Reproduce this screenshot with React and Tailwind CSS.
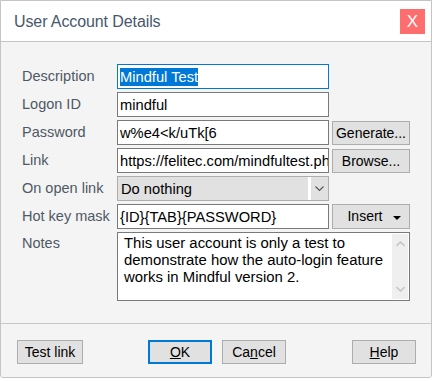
import React from "react";

const F = { fontFamily: '"Liberation Sans", Arial, sans-serif' };

function Field({ children, className = "" }) {
  return (
    <div
      className={
        "h-[25px] w-[212px] border border-[#7a7a7a] bg-white pl-[2px] pt-[1px] flex items-center overflow-hidden whitespace-nowrap text-[14.7px] text-black " +
        className
      }
    >
      {children}
    </div>
  );
}

function Btn({ children, className = "" }) {
  return (
    <div
      className={
        "flex items-center justify-center border border-[#adadad] bg-[#e1e1e1] text-[14px] text-black whitespace-nowrap " +
        className
      }
    >
      {children}
    </div>
  );
}

function Label({ children, top = false }) {
  return (
    <div
      className={
        "w-[116px] shrink-0 pl-[21px] text-[14.5px] text-[#4e5964] whitespace-nowrap " +
        (top ? "pt-[1px]" : "flex items-center pt-[1px]")
      }
    >
      {children}
    </div>
  );
}

export default function App() {
  return (
    <div className="w-[434px] h-[381px] bg-white" style={F}>
      <div className="w-[432px] h-[378px] border border-[#c4c4c4] rounded-b-[3px] flex flex-col overflow-hidden">
        {/* title bar */}
        <div className="h-[40px] bg-white flex items-center justify-between border-b border-[#c4c4c4] box-content">
          <div className="pl-[13px] pt-[1px] text-[16px] text-[#47586b] tracking-[-0.1px]">
            User Account Details
          </div>
          <div className="mr-[6px] w-[25px] h-[25px] bg-[#ff6e6e] text-white text-[17px] flex items-center justify-center leading-none">
            X
          </div>
        </div>

        {/* body */}
        <div className="flex-1 bg-[#f4f4f4] flex flex-col">
          <div className="pt-[22px] flex flex-col gap-[3px]">
            <div className="flex h-[25px]">
              <Label>Description</Label>
              <Field className="border-[#0078d7]">
                <span className="bg-[#0078d7] text-white leading-[18px]">Mindful Test</span>
              </Field>
            </div>
            <div className="flex h-[25px]">
              <Label>Logon ID</Label>
              <Field>mindful</Field>
            </div>
            <div className="flex h-[25px]">
              <Label>Password</Label>
              <Field>w%e4&lt;k/uTk[6</Field>
              <Btn className="ml-[3px] w-[78px] h-[24px] mt-[1px]">Generate...</Btn>
            </div>
            <div className="flex h-[25px]">
              <Label>Link</Label>
              <Field>https://felitec.com/mindfultest.php</Field>
              <Btn className="ml-[3px] w-[78px] h-[24px] mt-[1px]">Browse...</Btn>
            </div>
            <div className="flex h-[25px]">
              <Label>On open link</Label>
              <div className="h-[25px] w-[212px] border border-[#adadad] bg-[#e1e1e1] flex items-stretch">
                <div className="flex-1 pl-[3px] pt-[1px] flex items-center text-[14.7px] text-black">
                  Do nothing
                </div>
                <div className="w-[3px] bg-white" />
                <div className="w-[17px] flex items-center justify-center">
                  <svg width="9" height="6" viewBox="0 0 9 6">
                    <path d="M0.5 0.5 L4.5 4.5 L8.5 0.5" fill="none" stroke="#555" strokeWidth="1.1" />
                  </svg>
                </div>
              </div>
            </div>
            <div className="flex h-[25px]">
              <Label>Hot key mask</Label>
              <Field>{"{ID}{TAB}{PASSWORD}"}</Field>
              <Btn className="ml-[3px] w-[78px] h-[25px] relative">
                <span className="mr-[12px]">Insert</span>
                <svg className="absolute right-[8px] top-[11px]" width="8" height="4" viewBox="0 0 8 4">
                  <path d="M0 0 L8 0 L4 4 Z" fill="#000" />
                </svg>
              </Btn>
            </div>
            <div className="flex h-[69px]">
              <Label top>Notes</Label>
              <div className="w-[293px] h-[69px] border border-[#7a7a7a] bg-white flex">
                <div className="flex-1 pl-[6px] pt-[2px] text-[14.9px] leading-[17px] text-black whitespace-nowrap">
                  This user account is only a test to
                  <br />
                  demonstrate how the auto-login feature
                  <br />
                  works in Mindful version 2.
                </div>
                <div className="w-[16px] my-[1px] mr-[1px] bg-[#efefef] flex flex-col items-center justify-between py-[7px]">
                  <svg width="9" height="6" viewBox="0 0 9 6">
                    <path d="M0.5 5 L4.5 1 L8.5 5" fill="none" stroke="#c6c6c6" strokeWidth="1.6" />
                  </svg>
                  <svg width="9" height="6" viewBox="0 0 9 6">
                    <path d="M0.5 1 L4.5 5 L8.5 1" fill="none" stroke="#c6c6c6" strokeWidth="1.6" />
                  </svg>
                </div>
              </div>
            </div>
          </div>

          <div className="mt-[22px] h-[1px] bg-[#c8c8c8]" />

          <div className="flex pt-[16px] pl-[16px] pr-[15px]">
            <Btn className="w-[66px] h-[24px]">Test link</Btn>
            <div className="ml-[65px] w-[64px] h-[24px] border-2 border-[#0078d7] bg-[#e1e1e1] flex items-center justify-center text-[14px] text-black">
              <span><u>O</u>K</span>
            </div>
            <Btn className="ml-[10px] w-[64px] h-[24px]">
              <span>Ca<u>n</u>cel</span>
            </Btn>
            <Btn className="ml-auto w-[64px] h-[24px]">
              <span><u>H</u>elp</span>
            </Btn>
          </div>
        </div>
      </div>
    </div>
  );
}
